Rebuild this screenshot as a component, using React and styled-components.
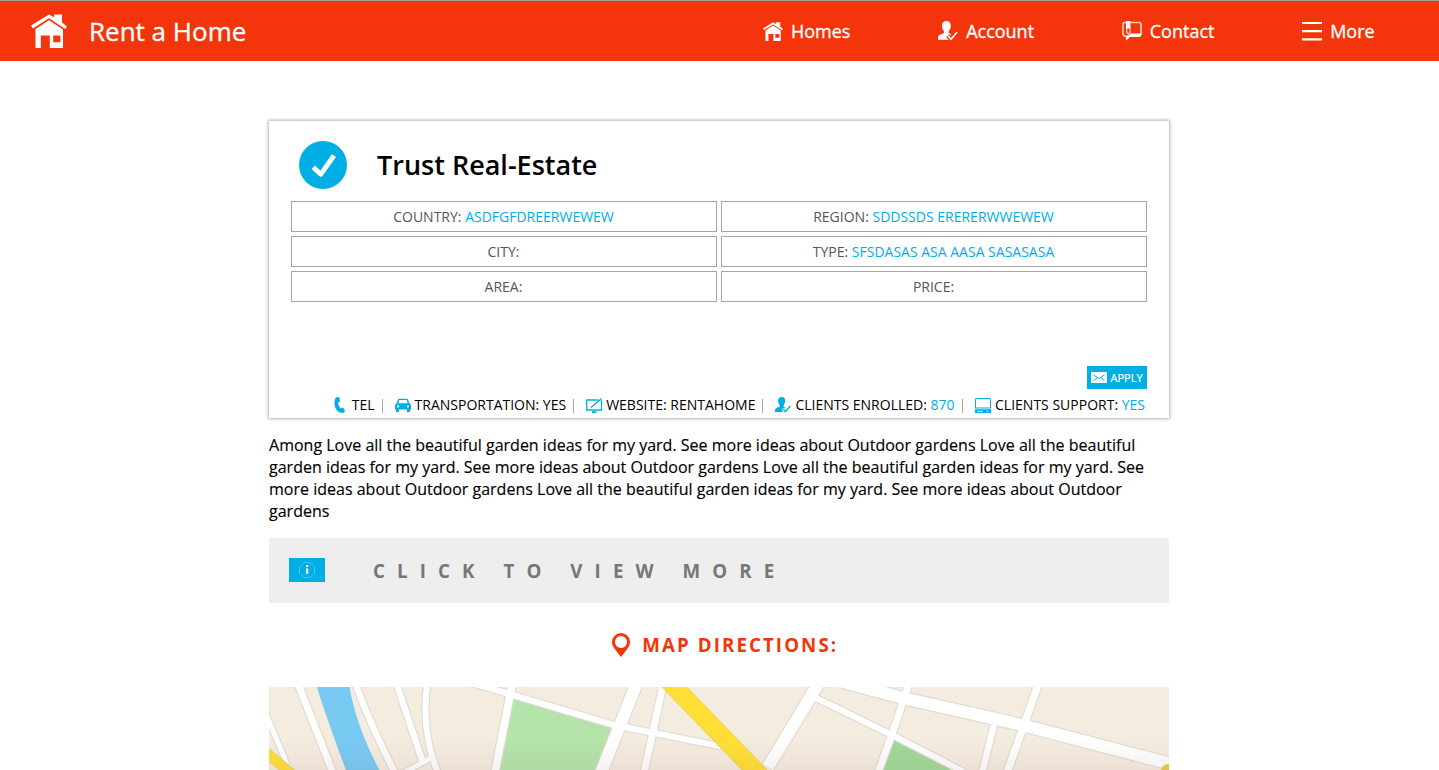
import React from 'react';
import styled, { createGlobalStyle } from 'styled-components';

const RED = '#f4350b';
const BLUE = '#00aee6';

const GlobalStyle = createGlobalStyle`
  * { box-sizing: border-box; }
  html, body { margin: 0; height: 100%; overflow: hidden; background: #fff; }
  body { font-family: "Open Sans", sans-serif; color: #000; }
`;

const Header = styled.header`
  display: flex;
  justify-content: space-between;
  align-items: center;
  height: 61px;
  padding: 0 64.400px 0 31px;
  background: ${RED};
  border-top: 1px solid #a29f9c;
  color: #fff;
  -webkit-text-stroke: 0.3px currentColor;
`;
const Brand = styled.div`
  display: flex;
  align-items: center;
  gap: 22px;
  font-size: 26px;
  line-height: 36px;
`;
const Nav = styled.nav`
  display: flex;
  gap: 87.700px;
`;
const NavItem = styled.a`
  display: flex;
  align-items: center;
  gap: 8px;
  font-size: 18px;
  font-weight: 500;
  line-height: 24px;
`;
const Icon = styled.svg`
  display: block;
  flex: none;
  width: ${p => p.$w}px;
  height: ${p => p.$h || p.$w}px;
`;
const Main = styled.main`
  width: 900px;
  margin: 60px auto 0 269px;
`;
const Card = styled.section`
  display: flex;
  flex-direction: column;
  height: 297px;
  padding: 20px 22px 0;
  box-shadow: 0 0 3px 1px #b4b4b4;
`;
const CardHead = styled.div`
  display: flex;
  align-items: center;
  gap: 30px;
  padding-left: 8px;
  height: 48px;
`;
const Title = styled.h1`
  margin: 0;
  font-size: 27px;
  font-weight: 600;
  line-height: 36px;
`;
const Facts = styled.div`
  display: grid;
  grid-template-columns: 1fr 1fr;
  grid-auto-rows: 31px;
  gap: 4px;
  margin-top: 12px;
`;
const Fact = styled.div`
  border: 1px solid #a6a6a6;
  padding-right: 1px;
  text-align: center;
  font-size: 14px;
  line-height: 30px;
  color: #555;
`;
const Value = styled.span`
  color: ${BLUE};
`;
const Apply = styled.button`
  display: flex;
  align-items: center;
  align-self: flex-end;
  gap: 3.500px;
  width: 60px;
  height: 23px;
  margin-top: 64px;
  padding: 0 0 0 4px;
  border: 0;
  background: ${BLUE};
  color: #fff;
  font: 500 11px "Open Sans", sans-serif;
  -webkit-text-stroke: 0.2px currentColor;
`;
const Stats = styled.div`
  display: flex;
  justify-content: flex-end;
  align-items: center;
  height: 20px;
  margin-top: 6px;
  padding-right: 2px;
  font-size: 14px;
  line-height: 20px;
  white-space: pre;
`;
const Stat = styled.span`
  display: flex;
  align-items: center;
  gap: ${p => p.$gap}px;
`;
const BlueIcon = styled.span`
  color: ${BLUE};
`;
const Divider = styled.span`
  width: 1px;
  height: 14px;
  margin: 2px ${p => p.$after}px 0 7px;
  background: #aaa;
`;
const Description = styled.p`
  margin: 16px 0;
  font-size: 16px;
  line-height: 22px;
  letter-spacing: 0.008px;
  -webkit-text-stroke: 0.15px currentColor;
`;
const MoreBar = styled.div`
  display: flex;
  align-items: center;
  gap: 48px;
  height: 65px;
  padding: 0 20px;
  background: #eee;
  color: #777;
  font-size: 18.720px;
  font-weight: 700;
  letter-spacing: 12.100px;
`;
const InfoBadge = styled.span`
  display: flex;
  align-items: center;
  justify-content: center;
  width: 36px;
  height: 24px;
  margin-bottom: 2px;
  background: ${BLUE};
`;
const MapHeading = styled.h2`
  display: flex;
  align-items: center;
  justify-content: center;
  gap: 12.500px;
  height: 24px;
  margin: 30px 0;
  padding-left: 12px;
  color: ${RED};
  font-size: 18.720px;
  font-weight: 700;
  line-height: 24px;
  letter-spacing: 2.080px;
`;
const MapView = styled.svg`
  display: block;
  width: 900px;
  height: 83px;
`;

const HomeIcon = ({ w, h }) => (
  <Icon $w={w} $h={h} viewBox="0 0 36 34" fill="currentColor">
    <path d="M0 11.500 18 .5l5 2.800V.5h8v8l5 4-1.800 2.400L18 4.300 1.800 14.400z" />
    <path d="M18 6.200 32 15.400V34H18.800V21.500H9.800V34H4.500V15zM22.200 21.500v6.800h7.200v-6.800z" fillRule="evenodd" />
  </Icon>
);
const UserIcon = ({ w, knockout }) => (
  <Icon $w={w} viewBox="0 0 20 20" fill="currentColor">
    <path d="M8.300 0c2.800 0 4.500 2 4.500 4.800 0 2.200-.9 4-2 5.100v2.200l2.300 1.200-1 1.300 2.900 4.100H0v-1.800c0-2 .9-2.900 2.600-3.500l3.300-1.500V9.900c-1.200-1.100-2-2.900-2-5.100C3.900 2 5.500 0 8.300 0z" />
    <path d="m9.800 14.800 3.200 3.800 5.600-6.700" fill="none" stroke={knockout} strokeWidth="4" />
    <path d="m10.200 15 2.800 3.300 6-7" fill="none" stroke="currentColor" strokeWidth="1.700" />
  </Icon>
);
const ChatIcon = () => (
  <Icon $w={20} viewBox="0 0 20 20" fill="none" stroke="currentColor">
    <path d="M4 1.500H2.800Q1 1.500 1 3.500v9Q1 15 3.500 15M8.500 1.500h8.700q1.800 0 1.800 1.800V14" strokeWidth="1.700" opacity=".75" />
    <path d="M4 0h4.500v8.500L6.200 7.300 4 8.500z" fill="currentColor" stroke="none" />
    <path d="M4.700 8v3.400l1.600 1.500L8 11.200V8.500" strokeWidth="1.300" opacity=".75" />
    <path d="M8.500 12.500H19.300v1q0 2.500-2.300 2.500H7.800L4.300 19.800 3.300 14.500h3z" fill="currentColor" stroke="none" />
  </Icon>
);
const MenuIcon = () => (
  <Icon $w={20} viewBox="0 0 20 20" stroke="currentColor" strokeWidth="2.200">
    <path d="M0 2h20M0 10.200h20M0 18.300h20" />
  </Icon>
);
const CheckIcon = () => (
  <Icon $w={48} viewBox="0 0 48 48">
    <circle cx="24" cy="24" r="24" fill={BLUE} />
    <path d="m14.200 26.300 7.500 7L35 14.500" fill="none" stroke="#fff" strokeWidth="4.800" strokeLinejoin="round" />
  </Icon>
);
const PhoneIcon = () => (
  <Icon $w={12} $h={16} viewBox="0 0 12 16" fill={BLUE}>
    <path d="M2.600.3 5.300.2l.9 4.200-2 .8c-.1 2.300.8 4.600 2.700 6.200l2.200-.8 2 3.500-1.500 1.700C4.500 16.300.8 12.500.5 7 .4 3.600 1.100 1.200 2.600.3z" />
  </Icon>
);
const CarIcon = () => (
  <Icon $w={16} $h={14} viewBox="0 0 16 14" fill={BLUE}>
    <path fillRule="evenodd" d="M3 1.500Q3.300.7 4.500.7h7Q12.700.7 13 1.500l1.300 3.800Q16 6 16 7.500v4h-1V14h-3v-2.500H4V14H1v-2.500H0v-4Q0 6 1.700 5.300zM4.300 2 3.300 5.300h9.400l-1-3.300zM3 7.300a1.100 1.100 0 1 0 .01 0zM13 7.300a1.100 1.100 0 1 0 .01 0z" />
  </Icon>
);
const ScreenIcon = () => (
  <Icon $w={17} $h={15} viewBox="0 0 17 15" fill="none" stroke={BLUE}>
    <path d="M12 2H.7v10h14.800V2M5 9.500 15.500.5" strokeWidth="1.300" />
    <path d="M6 14h4.500" strokeWidth="1.800" />
  </Icon>
);
const ComputerIcon = () => (
  <Icon $w={16} $h={15} viewBox="0 0 16 15" fill={BLUE}>
    <path fillRule="evenodd" d="M1.500 0h13q1.500 0 1.500 1.500V10.500H0V1.500Q0 0 1.500 0zM1 1v8.500h14V1zM0 11.300h16V15H0z" />
    <path d="M2 13.400h6M11.500 13.400h2" stroke="#fff" strokeWidth=".7" />
  </Icon>
);
const MailIcon = () => (
  <Icon $w={16} $h={11} viewBox="0 0 16 11">
    <rect width="16" height="11" rx="1" fill="#fff" />
    <path d="m2.500 3 5.500 3.500L13.500 3M2.500 8.700l3.700-2.900M13.500 8.700 9.800 5.800" fill="none" stroke={BLUE} strokeWidth="1" />
  </Icon>
);
const InfoIcon = () => (
  <Icon $w={16} viewBox="0 0 16 16">
    <path d="M5 .5h6L15.500 5v6L11 15.500H5L.5 11V5z" fill="none" stroke="#7fd3f0" strokeWidth=".6" />
    <path d="M7 3h2.300v2H7zM7 6.500h2.300V12H7z" fill="#fff" />
  </Icon>
);
const PinIcon = () => (
  <Icon $w={18} $h={24} viewBox="0 0 18 24" fill={RED}>
    <path fillRule="evenodd" d="M9 0a9 9 0 0 1 9 9c0 3-1.500 5.200-3 7.300L9 24l-6-7.700C1.500 14.200 0 12 0 9a9 9 0 0 1 9-9zm0 3a6 6 0 1 0 .01 0z" />
  </Icon>
);

const roads = [
  ['M-4 25 L18 77', 5],
  ['M29.500 -2 L64 86', 7],
  ['M87 -2 Q98 30 126 86', 6.500],
  ['M128 -2 L154 76', 6.500],
  ['M158 -2 Q152 45 169 86', 6],
  ['M136 85 L162 71', 5],
  ['M200 -5 L291 22 L345 38 L380 45 L455 60', 6],
  ['M243 -2 L226 85', 7.500],
  ['M367 -2 L332 86', 12],
  ['M394 -2 L375 86', 7],
  ['M550 -4 L499 80', 12],
  ['M545 10 L623 48 L697 86', 6],
  ['M574 -5 L634 11 L753 38 L902 77', 12],
  ['M640 -4 L629 30 L609 86', 7],
  ['M725 38 L713 86', 6.500],
  ['M769 -2 L738 86', 7.500],
];

const StreetMap = () => (
  <MapView viewBox="0 0 900 83">
    <defs>
      <linearGradient id="shade" x1="0" y1="0" x2="0" y2="1">
        <stop offset=".6" stopColor="#806050" stopOpacity="0" />
        <stop offset="1" stopColor="#806050" stopOpacity=".08" />
      </linearGradient>
      <filter id="soft" x="-2%" y="-10%" width="104%" height="120%">
        <feGaussianBlur stdDeviation=".75" />
      </filter>
    </defs>
    <rect width="900" height="83" fill="#f5ece0" />
    <g filter="url(#soft)">
      <path d="M244 8 345 38 326 86H229z" fill="#b5e4aa" />
      <path d="M624 51 692 86H611z" fill="#9fda98" />
      <g fill="none" stroke="#e0dad3">
        {roads.map(([d, w]) => <path key={d} d={d} strokeWidth={w + 2.200} />)}
      </g>
      <path d="M47 -3Q57 30 78 86H112Q87 40 80-3z" fill="#78caf3" />
      <g fill="none" stroke="#fff">
        {roads.map(([d, w]) => <path key={d} d={d} strokeWidth={w} />)}
      </g>
      <path d="M390-3H415L501 86H476zM-3 59 29 86H14L-3 72z" fill="#ffdf35" stroke="#e2cb60" strokeWidth=".8" />
      <circle cx="899" cy="84" r="7" fill="#edca48" />
    </g>
    <rect width="900" height="83" fill="url(#shade)" />
  </MapView>
);

export default function App() {
  return (
    <>
      <GlobalStyle />
      <Header>
        <Brand><HomeIcon w={36} h={34} /><span>Rent a Home</span></Brand>
        <Nav>
          <NavItem><HomeIcon w={20} h={19} />Homes</NavItem>
          <NavItem><UserIcon w={20} knockout={RED} />Account</NavItem>
          <NavItem><ChatIcon />Contact</NavItem>
          <NavItem><MenuIcon />More</NavItem>
        </Nav>
      </Header>
      <Main>
        <Card>
          <CardHead><CheckIcon /><Title>Trust Real-Estate</Title></CardHead>
          <Facts>
            <Fact>COUNTRY: <Value>ASDFGFDREERWEWEW</Value></Fact>
            <Fact>REGION: <Value>SDDSSDS ERERERWWEWEW</Value></Fact>
            <Fact>CITY:</Fact>
            <Fact>TYPE: <Value>SFSDASAS ASA AASA SASASASA</Value></Fact>
            <Fact>AREA:</Fact>
            <Fact>PRICE:</Fact>
          </Facts>
          <Apply><MailIcon />APPLY</Apply>
          <Stats>
            <Stat $gap={6}><PhoneIcon />TEL</Stat>
            <Divider $after={12} />
            <Stat $gap={4}><CarIcon />TRANSPORTATION: YES</Stat>
            <Divider $after={12} />
            <Stat $gap={3}><ScreenIcon />WEBSITE: RENTAHOME</Stat>
            <Divider $after={12} />
            <Stat $gap={4}><BlueIcon><UserIcon w={16} knockout="#fff" /></BlueIcon><span>CLIENTS ENROLLED: <Value>870</Value></span></Stat>
            <Divider $after={12.500} />
            <Stat $gap={4}><ComputerIcon /><span>CLIENTS SUPPORT: <Value>YES</Value></span></Stat>
          </Stats>
        </Card>
        <Description>
          Among Love all the beautiful garden ideas for my yard. See more ideas about Outdoor gardens Love all the beautiful garden ideas for my yard. See more ideas about Outdoor gardens Love all the beautiful garden ideas for my yard. See more ideas about Outdoor gardens Love all the beautiful garden ideas for my yard. See more ideas about Outdoor gardens
        </Description>
        <MoreBar><InfoBadge><InfoIcon /></InfoBadge>CLICK TO VIEW MORE</MoreBar>
        <MapHeading><PinIcon />MAP DIRECTIONS:</MapHeading>
        <StreetMap />
      </Main>
    </>
  );
}
